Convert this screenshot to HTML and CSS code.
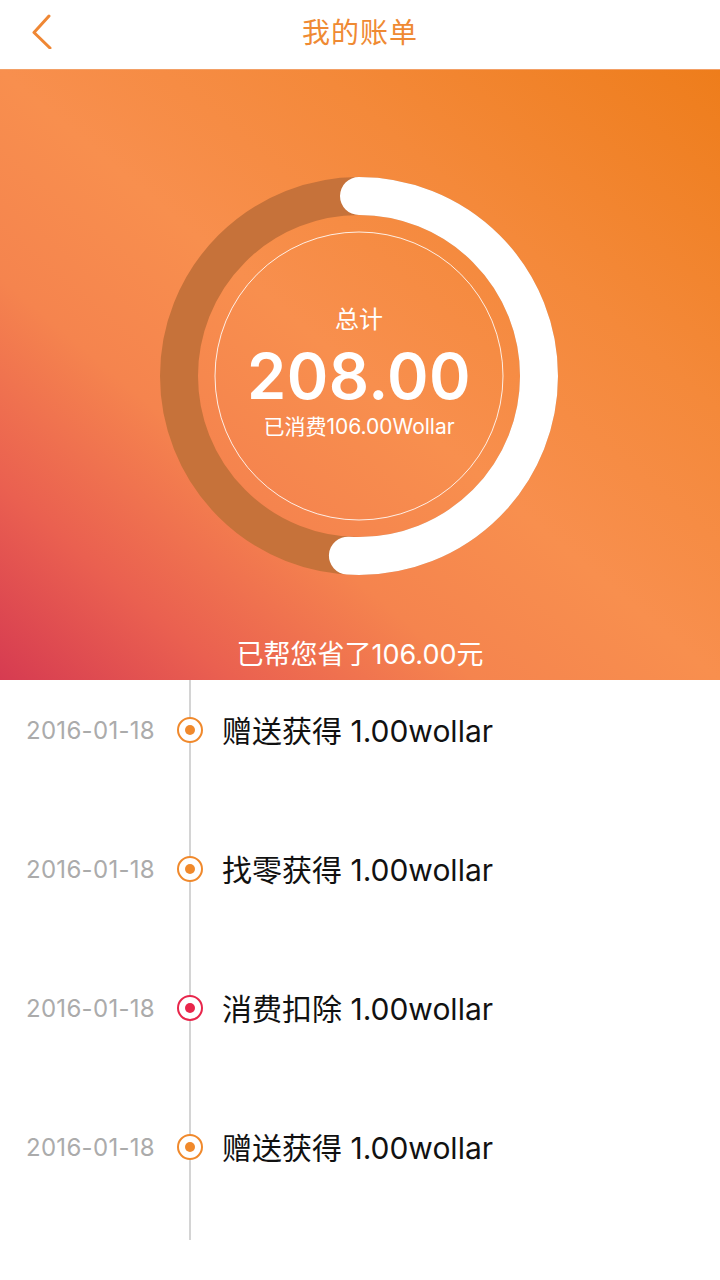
FILE: index.html
```html
<!DOCTYPE html>
<html lang="zh-CN">
<head>
<meta charset="utf-8">
<title>我的账单</title>
<link rel="stylesheet" href="styles.css">
</head>
<body>
<header class="topbar">
  <div class="back">
    <svg width="24" height="36" viewBox="0 0 24 36"><path d="M19 3 L4 19.5 L20 35" fill="none" stroke="#ef8734" stroke-width="3" stroke-linecap="round" stroke-linejoin="round"/></svg>
  </div>
  <h1 class="title">我的账单</h1>
  <div></div>
</header>
<section class="hero">
  <div class="ring">
    <svg class="ring-svg" width="400" height="400" viewBox="0 0 400 400">
      <circle cx="200" cy="200" r="180" fill="none" stroke="#c6723a" stroke-width="38"/>
      <circle cx="200" cy="200" r="180" fill="none" stroke="#ffffff" stroke-width="38" stroke-linecap="round" stroke-dasharray="576.4 2000" transform="rotate(-90 200 200)"/>
      <circle cx="200" cy="200" r="144" fill="none" stroke="rgba(255,255,255,0.85)" stroke-width="1"/>
    </svg>
    <div class="ring-text">
      <div class="label">总计</div>
      <div class="total">208.00</div>
      <div class="spent">已消费106.00Wollar</div>
    </div>
  </div>
  <div class="saved">已帮您省了106.00元</div>
</section>
<ul class="timeline">
  <li class="row"><span class="date">2016-01-18</span><span class="dot"></span><span class="desc">赠送获得 1.00wollar</span></li>
  <li class="row"><span class="date">2016-01-18</span><span class="dot"></span><span class="desc">找零获得 1.00wollar</span></li>
  <li class="row"><span class="date">2016-01-18</span><span class="dot dot-red"></span><span class="desc">消费扣除 1.00wollar</span></li>
  <li class="row"><span class="date">2016-01-18</span><span class="dot"></span><span class="desc">赠送获得 1.00wollar</span></li>
</ul>
</body>
</html>
```
FILE: styles.css
```css
* { box-sizing: border-box; }
html, body {
  margin: 0;
  padding: 0;
  background: #ffffff;
  width: 720px;
  font-family: Inter, "Noto Sans CJK SC", sans-serif;
}

.topbar {
  height: 69px;
  padding-bottom: 8px;
  display: grid;
  grid-template-columns: 1fr auto 1fr;
  align-items: center;
  background: #ffffff;
}
.back {
  padding-left: 30px;
  display: flex;
  align-items: center;
  height: 36px;
}
.back svg { display: block; }
.title {
  margin: 0;
  font-family: "Noto Sans CJK SC", sans-serif;
  font-weight: 400;
  font-size: 28px;
  line-height: 36px;
  color: #ef8a33;
  letter-spacing: 1px;
}

.hero {
  height: 611px;
  padding-top: 106px;
  display: flex;
  flex-direction: column;
  align-items: center;
  background: linear-gradient(to top right, #d63b51 0%, #ea6050 16%, #f5844e 33%, #f88f4e 50%, #f4893a 72%, #ee7d1b 100%);
  border-top: 1px solid #f3a066;
}
.ring {
  width: 400px;
  height: 400px;
  display: grid;
  margin-left: -2px;
}
.ring-svg, .ring-text { grid-area: 1 / 1; }
.ring-svg { display: block; }
.ring-text {
  align-self: center;
  justify-self: center;
  display: flex;
  flex-direction: column;
  align-items: center;
  color: #ffffff;
  padding-bottom: 10px;
}
.label {
  font-family: "Noto Sans CJK SC", sans-serif;
  font-size: 24px;
  line-height: 32px;
}
.total {
  margin-top: 7px;
  font-family: Inter, sans-serif;
  font-weight: 600;
  font-size: 63px;
  line-height: 70px;
  letter-spacing: 0.5px;
}
.spent {
  margin-top: 3px;
  font-size: 21px;
  line-height: 26px;
}
.saved {
  margin-top: 61px;
  font-size: 27px;
  line-height: 36px;
  color: #ffffff;
}

.timeline {
  list-style: none;
  margin: 0;
  padding: 30px 0 73px;
  position: relative;
  display: flex;
  flex-direction: column;
  gap: 99px;
}
.timeline::before {
  content: "";
  position: absolute;
  top: 0;
  bottom: 0;
  left: 189px;
  width: 2px;
  background: #d4d4d4;
}
.row {
  height: 40px;
  display: flex;
  align-items: center;
  position: relative;
}
.date {
  width: 155px;
  text-align: right;
  font-size: 24px;
  color: #ababab;
  letter-spacing: 0.3px;
}
.dot {
  margin-left: 22px;
  width: 26px;
  height: 26px;
  border-radius: 50%;
  border: 2.5px solid #f0892c;
  background: #ffffff;
  display: flex;
  align-items: center;
  justify-content: center;
}
.dot::after {
  content: "";
  width: 10px;
  height: 10px;
  border-radius: 50%;
  background: #f0892c;
}
.dot-red { border-color: #e8264b; }
.dot-red::after { background: #e8264b; }
.desc {
  margin-left: 19px;
  padding-bottom: 3px;
  font-size: 30px;
  color: #111111;
  white-space: nowrap;
}
```
